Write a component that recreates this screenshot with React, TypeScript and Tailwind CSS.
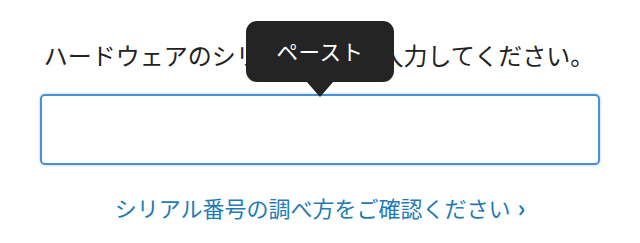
import React from "react";

export default function App() {
  return (
    <div
      className="relative w-[640px] h-[243px] bg-white overflow-hidden"
      style={{ fontFamily: '"Noto Sans CJK JP", "Noto Sans", sans-serif' }}
    >
      <div className="flex flex-col items-center pt-[37px]">
        <p className="text-[24px] leading-[36px] text-[#222222] text-center pr-[2px] whitespace-nowrap">
          ハードウェアのシリアル番号を入力してください。
        </p>
        <div className="mt-[21px] w-[560px] h-[71px] rounded-[5px] border-[2px] border-[#4a8fd6] shadow-[0_0_3px_rgba(74,143,214,0.5)] bg-white" />
        <a className="mt-[26px] text-[22px] leading-[32px] text-[#1e7bb5] whitespace-nowrap flex items-center">
          シリアル番号の調べ方をご確認ください
          <span className="ml-[7px] text-[24px] font-semibold">›</span>
        </a>
      </div>

      <div className="absolute left-[246px] top-[21px] w-[148px] h-[61px] rounded-[11px] bg-[#242424] flex items-center justify-center">
        <span className="text-white text-[21.5px] leading-none tracking-[0.5px] -mt-[2px]">ペースト</span>
      </div>
      <svg className="absolute left-[306px] top-[81px]" width="28" height="17" viewBox="0 0 28 17">
        <polygon points="0,0 28,0 14,16" fill="#242424" />
      </svg>
    </div>
  );
}
